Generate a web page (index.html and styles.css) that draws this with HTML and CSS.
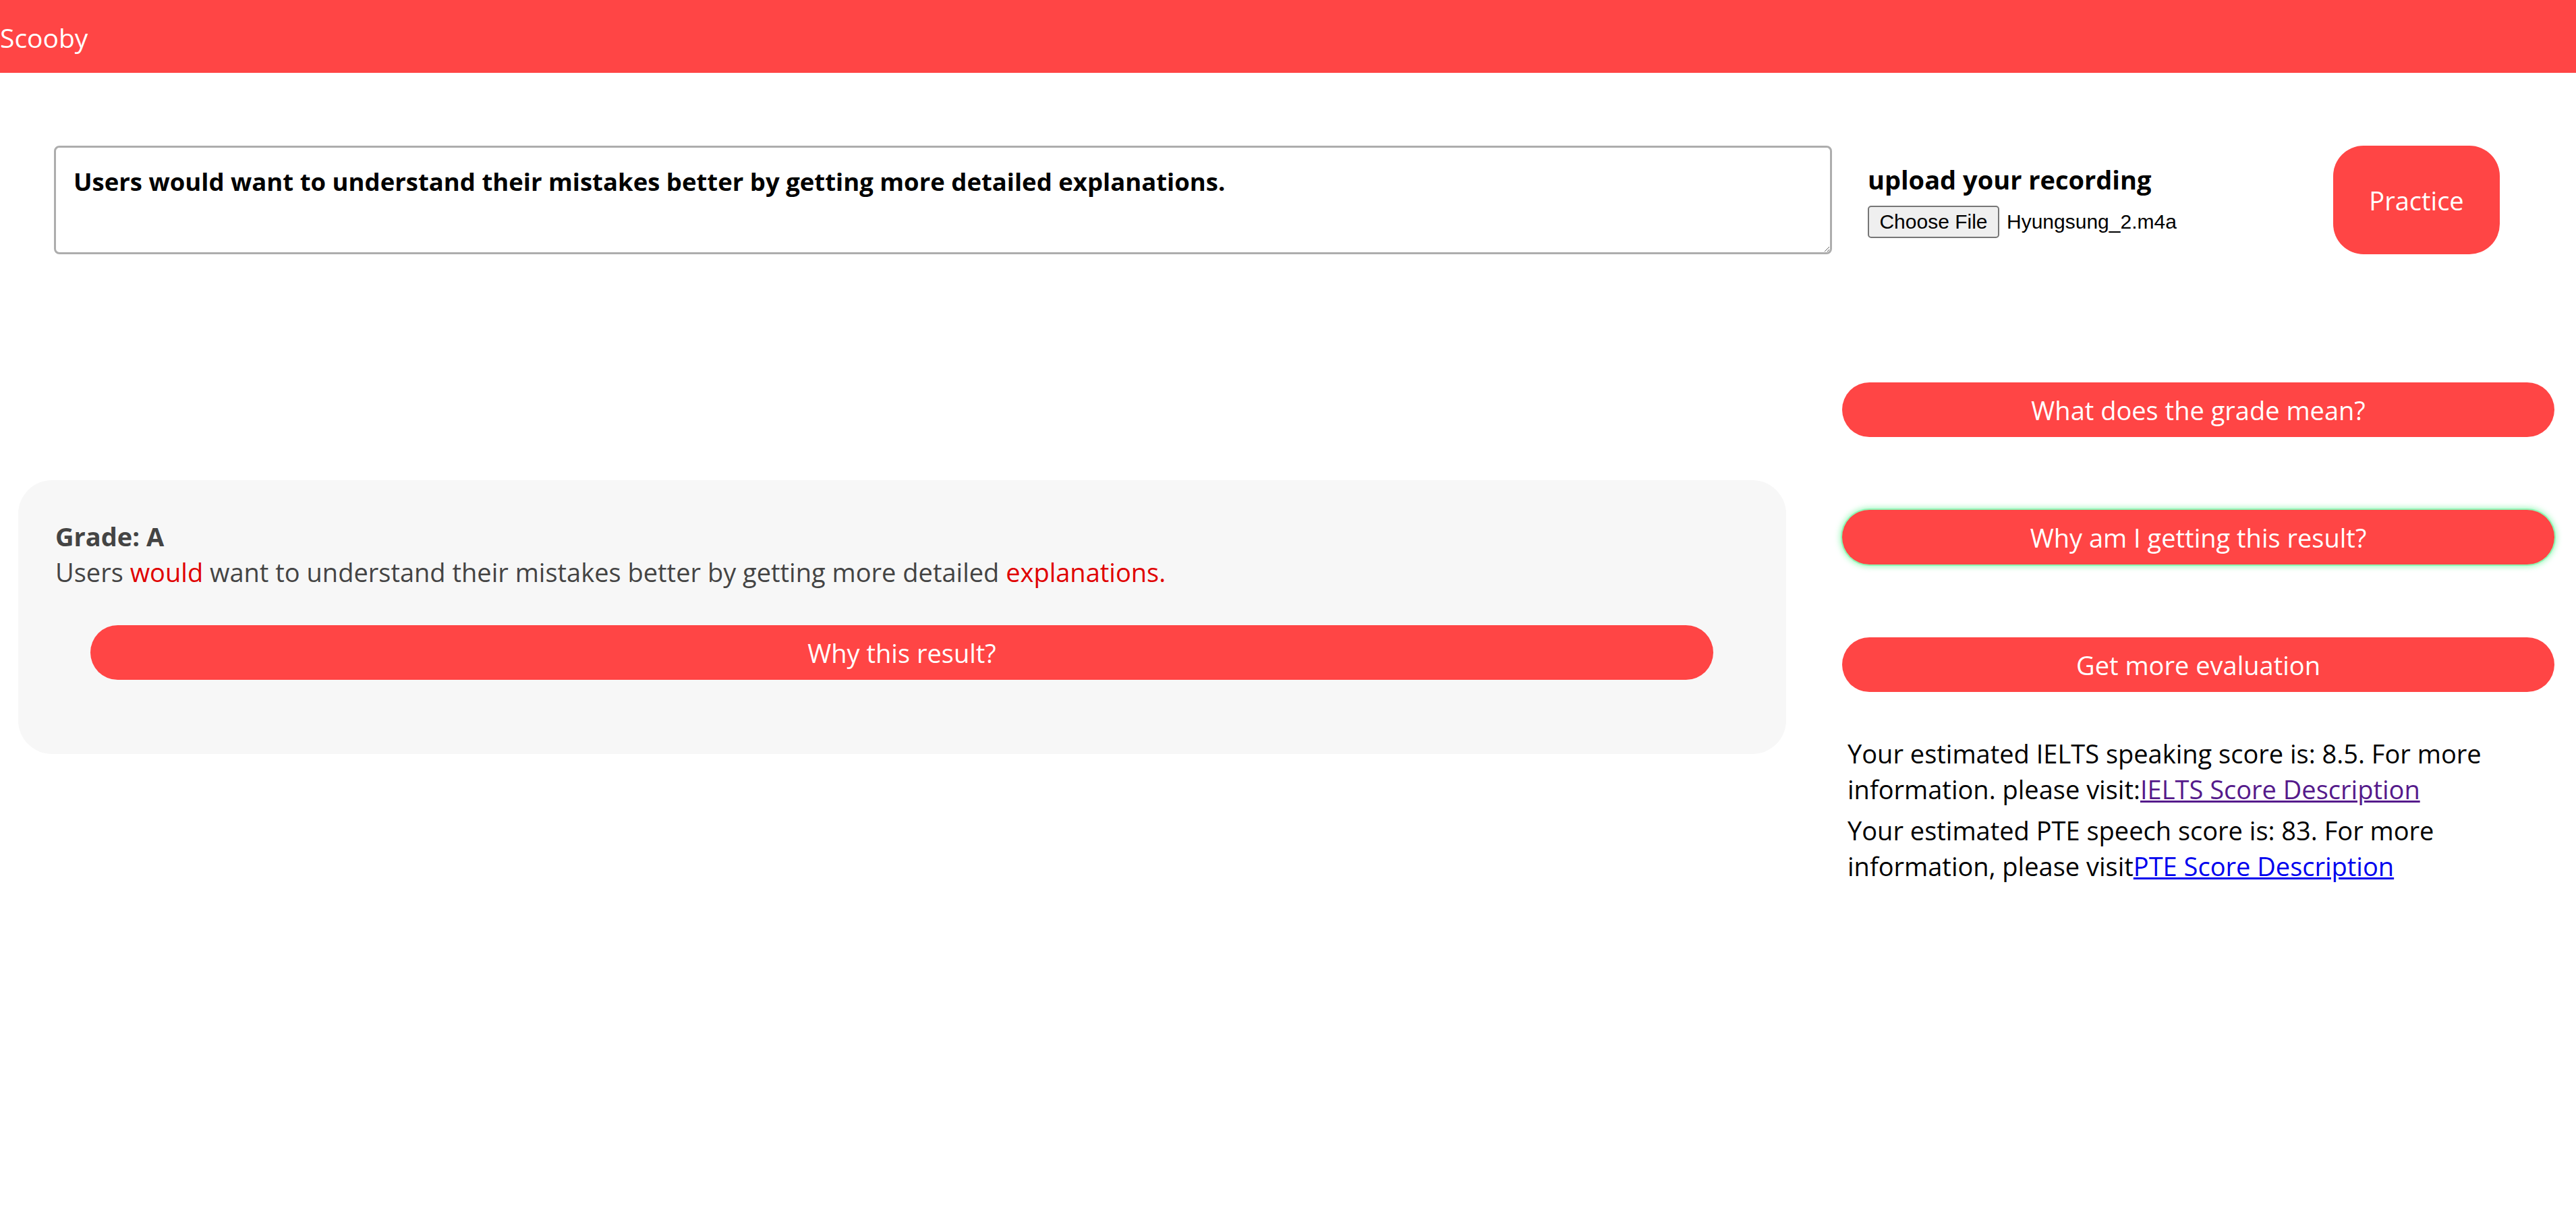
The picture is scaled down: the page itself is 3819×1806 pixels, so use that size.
FILE: index.html
```html
<!DOCTYPE html>
<html lang="en">
<head>
<meta charset="utf-8">
<title>Scooby</title>
<link rel="stylesheet" href="styles.css">
</head>
<body>
<header class="topbar">Scooby</header>
<section class="input-row">
  <textarea class="sentence-input">Users would want to understand their mistakes better by getting more detailed explanations.</textarea>
  <div class="upload">
    <div class="upload-title">upload your recording</div>
    <div class="file-picker">
      <span class="file-button">Choose File</span>
      <span class="file-name">Hyungsung_2.m4a</span>
    </div>
  </div>
  <button class="practice">Practice</button>
</section>
<main class="results">
  <div class="left-col">
    <div class="card">
      <div class="grade">Grade: A</div>
      <div class="sentence">Users <span class="err">would</span> want to understand their mistakes better by getting more detailed <span class="err">explanations.</span></div>
      <button class="pill wide">Why this result?</button>
    </div>
  </div>
  <div class="right-col">
    <button class="pill">What does the grade mean?</button>
    <button class="pill focused">Why am I getting this result?</button>
    <button class="pill">Get more evaluation</button>
    <div class="scores">
      <p>Your estimated IELTS speaking score is: 8.5. For more information. please visit:<a class="visited" href="#">IELTS Score Description</a></p>
      <p>Your estimated PTE speech score is: 83. For more information, please visit<a href="#">PTE Score Description</a></p>
    </div>
  </div>
</main>
</body>
</html>
```
FILE: styles.css
```css
html, body {
  margin: 0;
  padding: 0;
  background: #fff;
}
body {
  font-family: "Open Sans", "Noto Sans", sans-serif;
  font-size: 38px;
  line-height: 53px;
  color: #000;
}
.topbar {
  height: 108px;
  background: #ff4545;
  color: #fff;
  font-size: 39px;
  line-height: 112px;
}
.input-row {
  display: flex;
  align-items: flex-start;
  margin-top: 108px;
}
.sentence-input {
  box-sizing: border-box;
  margin: 0 0 0 80px;
  width: 2636px;
  height: 161px;
  padding: 24px 26px;
  border: 3px solid #adadad;
  border-radius: 8px;
  font-family: "Open Sans", "Noto Sans", sans-serif;
  font-weight: 700;
  font-size: 36.5px;
  line-height: 53px;
  color: #000;
  outline: none;
}
.upload {
  width: 690px;
  margin-left: 53px;
  padding-top: 24px;
}
.upload-title {
  font-weight: 700;
  font-size: 38px;
  line-height: 53px;
}
.file-picker {
  display: flex;
  align-items: center;
  margin-top: 12px;
  font-family: "Liberation Sans", Arial, sans-serif;
  font-size: 30px;
  line-height: 36px;
}
.file-button {
  box-sizing: border-box;
  width: 195px;
  height: 48px;
  display: flex;
  align-items: center;
  justify-content: center;
  background: #efefef;
  border: 2px solid #767676;
  border-radius: 5px;
  color: #000;
}
.file-name {
  margin-left: 11px;
}
.practice {
  width: 247px;
  height: 161px;
  border: none;
  border-radius: 45px;
  background: #ff4545;
  color: #fff;
  font-family: "Open Sans", "Noto Sans", sans-serif;
  font-size: 38px;
}
.results {
  display: flex;
  align-items: flex-start;
}
.left-col {
  margin-left: 27px;
  width: 2621px;
  padding-top: 335px;
}
.card {
  box-sizing: border-box;
  height: 406px;
  background: #f7f7f7;
  border-radius: 50px;
  padding: 57px 55px 0 55px;
  color: #444;
}
.grade {
  font-weight: 700;
}
.err {
  color: #e00000;
}
.pill {
  display: block;
  width: 100%;
  height: 81px;
  border: none;
  border-radius: 999px;
  background: #ff4545;
  color: #fff;
  font-family: "Open Sans", "Noto Sans", sans-serif;
  font-size: 38px;
  padding: 0;
}
.pill.wide {
  width: 2406px;
  margin: 52px 0 0 52px;
}
.right-col {
  margin-left: 83px;
  width: 1056px;
  padding-top: 190px;
  display: flex;
  flex-direction: column;
  gap: 108px;
}
.pill.focused {
  box-shadow: 0 0 0 2px #8ff5b4, 0 0 8px 3px rgba(130, 245, 170, 0.8);
}
.scores {
  margin-top: -43px;
  padding-left: 8px;
  padding-right: 30px;
}
.scores p {
  margin: 0 0 8px 0;
}
.scores a {
  color: #0000ee;
  text-decoration: underline;
}
.scores a.visited {
  color: #551a8b;
}
```
